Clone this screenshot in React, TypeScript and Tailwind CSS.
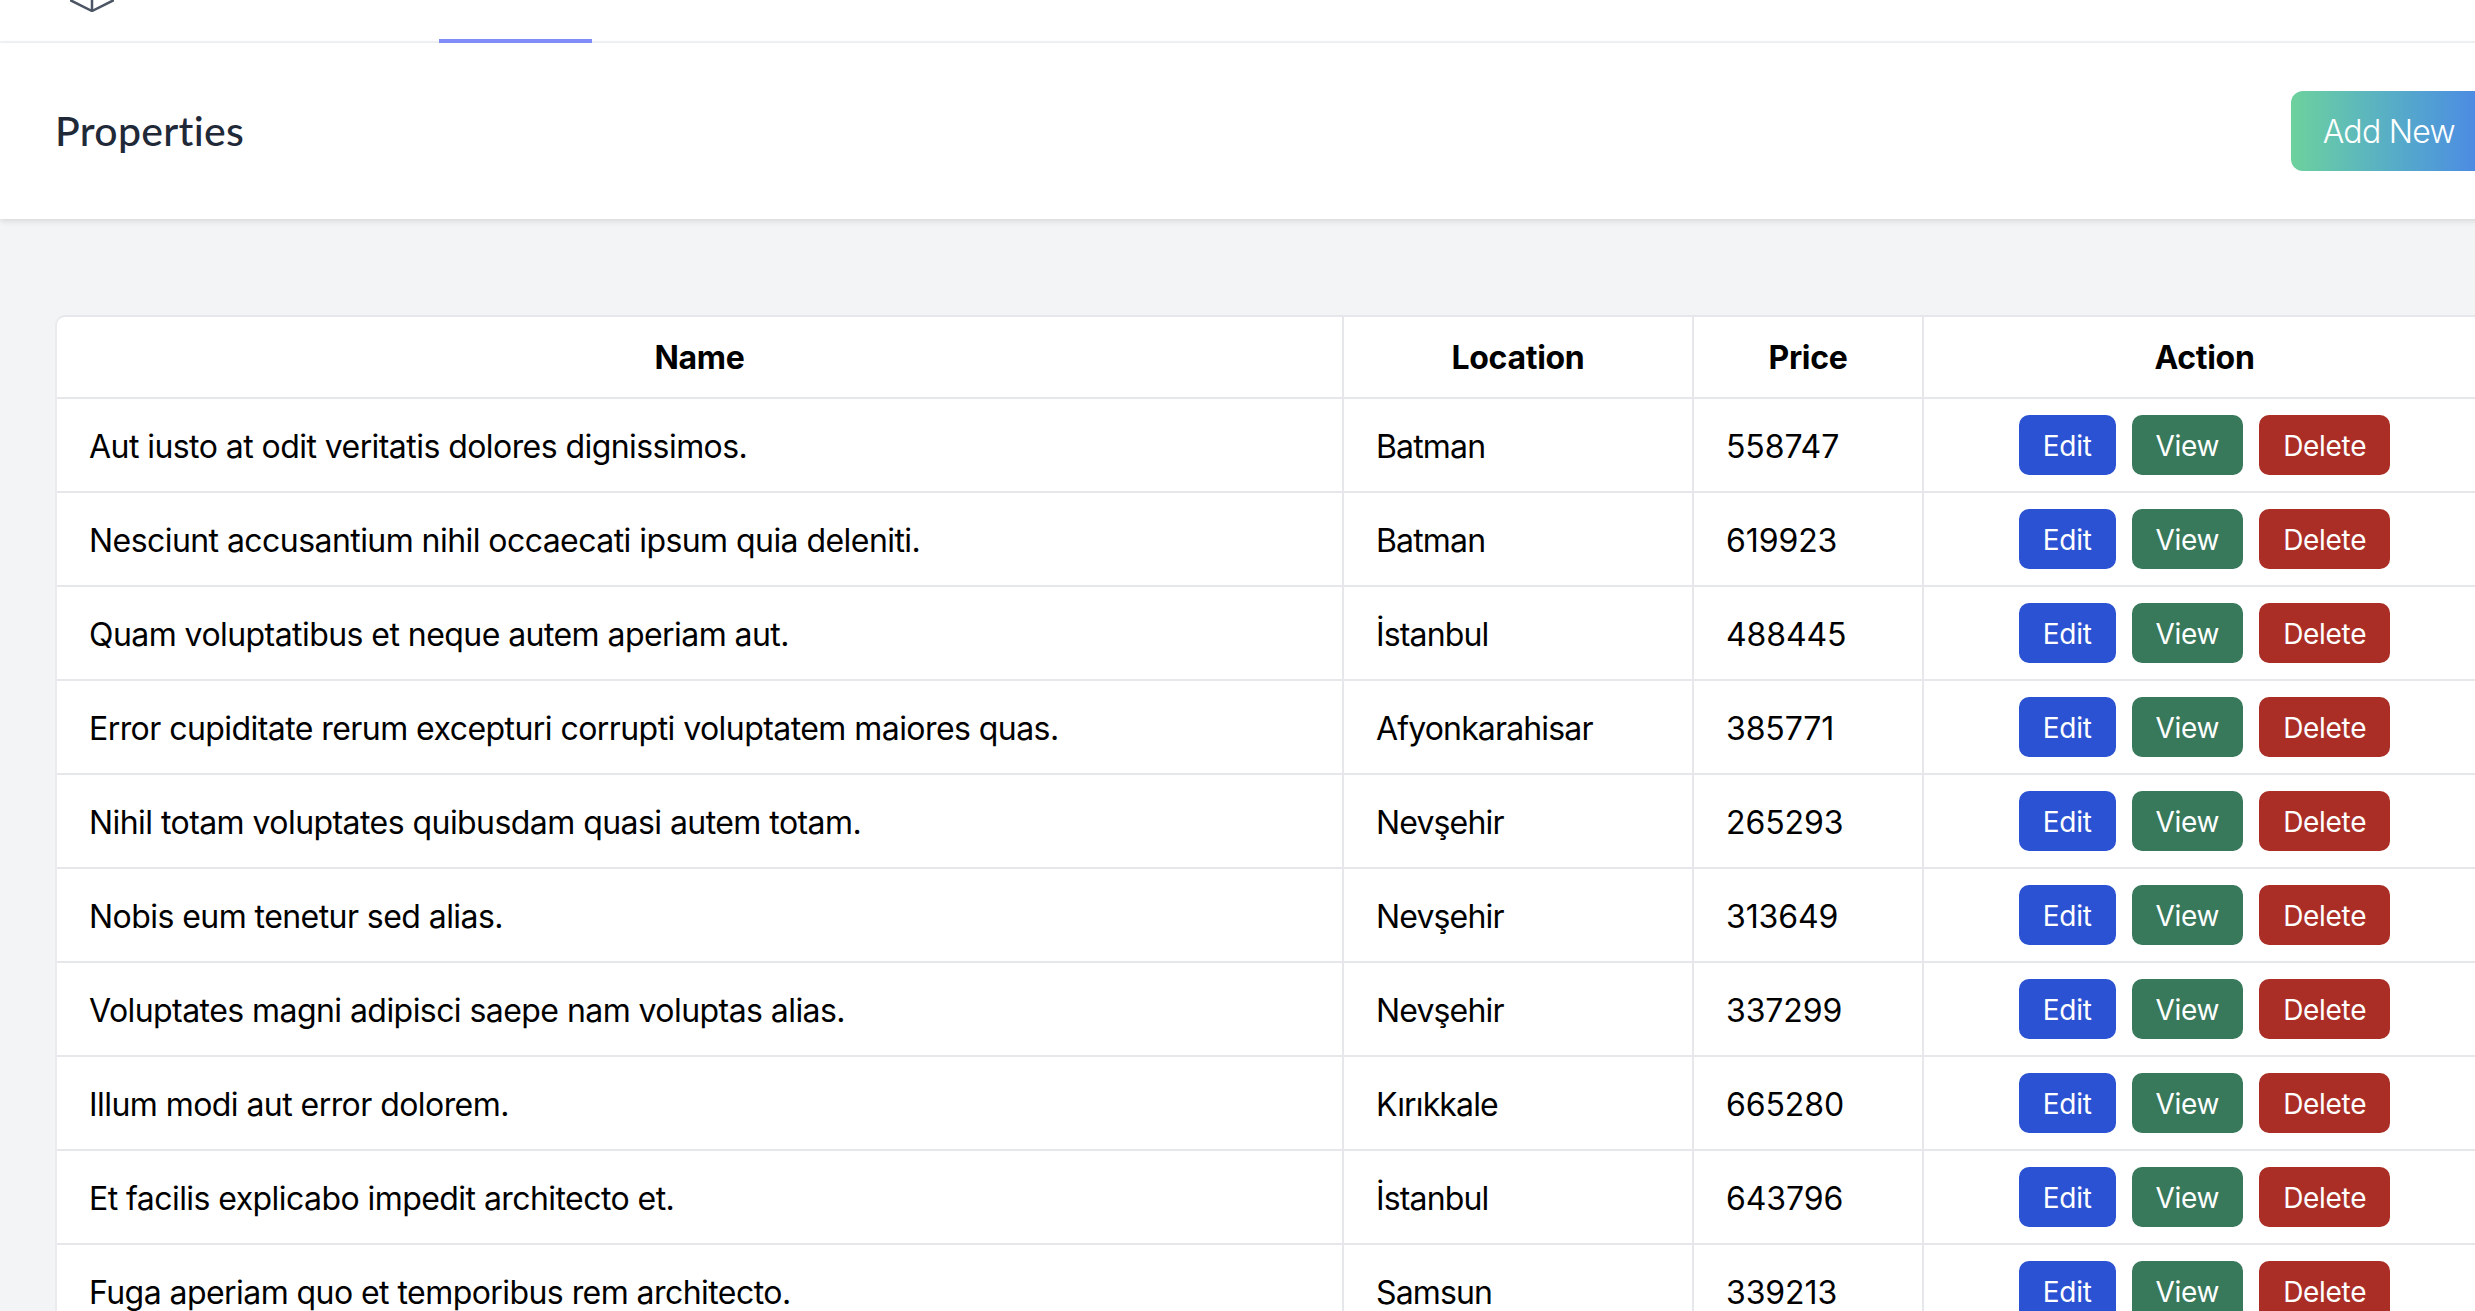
const rows = [
  ["Aut iusto at odit veritatis dolores dignissimos.", "Batman", "558747"],
  ["Nesciunt accusantium nihil occaecati ipsum quia deleniti.", "Batman", "619923"],
  ["Quam voluptatibus et neque autem aperiam aut.", "İstanbul", "488445"],
  ["Error cupiditate rerum excepturi corrupti voluptatem maiores quas.", "Afyonkarahisar", "385771"],
  ["Nihil totam voluptates quibusdam quasi autem totam.", "Nevşehir", "265293"],
  ["Nobis eum tenetur sed alias.", "Nevşehir", "313649"],
  ["Voluptates magni adipisci saepe nam voluptas alias.", "Nevşehir", "337299"],
  ["Illum modi aut error dolorem.", "Kırıkkale", "665280"],
  ["Et facilis explicabo impedit architecto et.", "İstanbul", "643796"],
  ["Fuga aperiam quo et temporibus rem architecto.", "Samsun", "339213"],
]

function Logo() {
  return (
    <svg className="-mt-[40px] ml-[70px] h-[52px] w-[44px] shrink-0" viewBox="0 0 44 52" fill="none" stroke="#4b5563" strokeWidth="2.5">
      <path d="M0 40 L22 51 L44 40 M22 51 V26" />
    </svg>
  )
}

export default function App() {
  return (
    <div className="h-[1311px] w-[2475px] overflow-hidden bg-[#f3f4f6] font-['Inter',sans-serif]">
      <div className="w-[2544px]">
        <nav className="flex h-[43px] items-start overflow-hidden bg-white shadow-[inset_0_-2px_0_#f3f4f6]">
          <Logo />
          <div className="ml-[325px] h-[43px] w-[153px] border-b-4 border-[#818cf8]" />
        </nav>

        <header className="flex h-[176px] items-center justify-between bg-white px-[57px] shadow-[0_2px_6px_rgba(0,0,0,0.12)]">
          <h2 className="-ml-[2px] font-['Lato',sans-serif] text-[41px] font-medium leading-[56px] tracking-[0.3px] text-[#1f2937] [font-variant-ligatures:none]">
            Properties
          </h2>
          <button className="h-[80px] rounded-[12px] bg-gradient-to-r from-[#6dd19c] to-[#4c86e6] px-[32px] pt-[2px] text-[32px] font-[350] tracking-[-0.7px] text-white">
            Add New
          </button>
        </header>

        <main className="px-[57px] pt-[98px]">
          <div className="w-[2430px] rounded-tl-[8px] bg-white shadow-[0_-2px_0_#e5e7eb,-2px_0_0_#eaebef]">
            <table className="w-[2428px] table-fixed border-collapse text-[32px] text-black">
              <thead>
                <tr className="h-[81px] border-b-2 border-[#e5e7eb]">
                  <th className="w-[1286px] pt-[2px] font-bold tracking-[-0.3px]">Name</th>
                  <th className="w-[350px] border-l-2 border-[#e5e7eb] pt-[2px] font-bold tracking-[-0.3px]">Location</th>
                  <th className="w-[230px] border-l-2 border-[#e5e7eb] pt-[2px] font-bold tracking-[-0.3px]">Price</th>
                  <th className="border-l-2 border-[#e5e7eb] pt-[2px] font-bold tracking-[-0.3px]">Action</th>
                </tr>
              </thead>
              <tbody className="font-[370]">
                {rows.map((row, index) => (
                  <tr key={index} className="h-[94px] border-b-2 border-[#e5e7eb]">
                    <td className="px-[32px] pt-[3px] tracking-[-0.56px]">{row[0]}</td>
                    <td className="border-l-2 border-[#e5e7eb] px-[32px] pt-[3px] tracking-[-0.85px]">{row[1]}</td>
                    <td className="border-l-2 border-[#e5e7eb] px-[32px] pt-[3px] tracking-[-0.1px]">{row[2]}</td>
                    <td className="border-l-2 border-[#e5e7eb]">
                      <div className="flex items-center justify-center gap-[16px] text-[28px] tracking-[-0.3px] text-white">
                        <button className="h-[60px] rounded-[10px] bg-[#2b52d2] px-[24px] pt-[2px]">Edit</button>
                        <button className="h-[60px] rounded-[10px] bg-[#38795b] px-[24px] pt-[2px]">View</button>
                        <button className="h-[60px] rounded-[10px] bg-[#aa2e26] px-[24px] pt-[2px]">Delete</button>
                      </div>
                    </td>
                  </tr>
                ))}
              </tbody>
            </table>
          </div>
        </main>
      </div>
    </div>
  )
}
